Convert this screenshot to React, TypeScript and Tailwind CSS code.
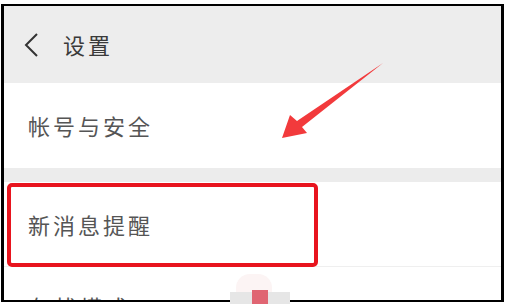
export default function App() {
  const font = { fontFamily: '"Noto Sans CJK SC", "Noto Sans", sans-serif' };
  return (
    <div className="relative h-[304px] w-[506px] overflow-hidden bg-white" style={font}>
      {/* phone frame */}
      <div className="ml-[1px] mt-[4px] flex h-[298px] w-[503px] flex-col overflow-hidden border-x-[3px] border-y-2 border-black bg-white">
        {/* header */}
        <div className="flex h-[77px] shrink-0 items-center bg-[#ededed] pl-[18px]">
          <svg width="18" height="26" viewBox="0 0 18 26" className="mr-[23px]">
            <path d="M15 2 L4 13 L15 24" fill="none" stroke="#333" strokeWidth="2" />
          </svg>
          <span className="text-[22px] tracking-[3px] text-[#3a3a3a]">设置</span>
        </div>

        {/* account row */}
        <div className="flex h-[85px] shrink-0 items-center pl-[24px]">
          <span className="text-[22px] tracking-[3px] text-[#555]">帐号与安全</span>
        </div>

        <div className="h-[14px] shrink-0 bg-[#ececec]" />

        {/* notification row */}
        <div className="flex h-[85px] shrink-0 items-center border-b border-[#efefef] pl-[24px]">
          <span className="text-[22px] tracking-[3px] text-[#555]">新消息提醒</span>
        </div>

        {/* next row, cut off by the frame */}
        <div className="flex h-[78px] shrink-0 items-center pl-[26px]">
          <span className="text-[22px] tracking-[3px] text-[#555]">勿扰模式</span>
        </div>
      </div>

      {/* red highlight box */}
      <div className="absolute left-[7px] top-[183px] h-[84px] w-[311px] rounded-[5px] border-4 border-[#e8141e]" />

      {/* arrow */}
      <svg className="absolute left-0 top-0" width="506" height="304" viewBox="0 0 506 304">
        <polygon
          points="383,63 302,127 307,133 282,138 290,115 297,121"
          fill="#f23a3c"
        />
      </svg>

      {/* watermark bit */}
      <div className="absolute left-[236px] top-[274px] h-[22px] w-[36px] rounded-t-[14px] bg-[#fcf4f4]" />
      <div className="absolute left-[230px] top-[292px] h-[12px] w-[60px] bg-[#e6e6e6]" />
      <div className="absolute left-[252px] top-[290px] h-[14px] w-[16px] bg-[#e06572]" />
    </div>
  );
}
